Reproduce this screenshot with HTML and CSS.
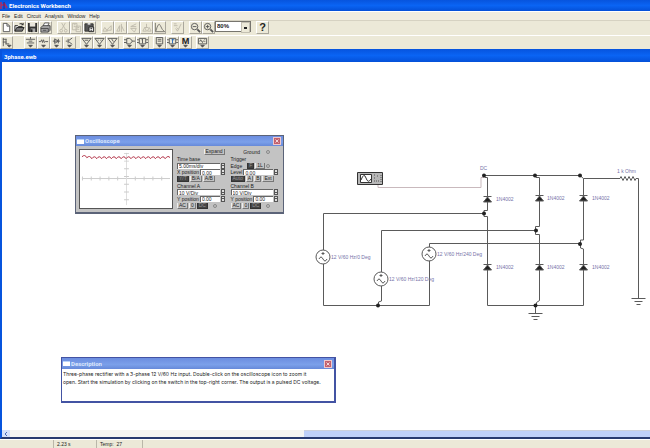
FILE: index.html
```html
<!DOCTYPE html>
<html lang="en">
<head>
<meta charset="utf-8">
<title>Electronics Workbench</title>
<link rel="stylesheet" href="styles.css">
</head>
<body>
<header class="titlebar">
  <svg class="app-icon" viewBox="0 0 8 9" aria-hidden="true"><path d="M1 1v7M1 4h5M4 2l3 5" stroke="#b52a5c" fill="none" stroke-width="1.5"/><path d="M4 1v7" stroke="#402070"/></svg>
  <h1>Electronics Workbench</h1>
</header>
<nav class="menu" aria-label="Main menu">
  <button>File</button><button>Edit</button><button>Circuit</button><button>Analysis</button><button>Window</button><button>Help</button>
</nav>
<div class="toolbar main-tools" role="toolbar" aria-label="Standard">
  <div class="group">
    <button class="tool" aria-label="New"><svg viewBox="0 0 12 12"><path d="M2.500 1.500h4l3 3v6h-7z" fill="#fff" stroke="#555"/><path d="M6.500 1.500v3h3" fill="none" stroke="#555"/></svg></button>
    <button class="tool" aria-label="Open"><svg viewBox="0 0 12 12"><path d="M1 10V4h3l1 1h4v2" fill="#eee" stroke="#222"/><path d="M1 10l2-4h8l-2 4z" fill="#777" stroke="#222"/><path d="M6 2q3-1 4 1M10 1v2H8" fill="none" stroke="#222"/></svg></button>
    <button class="tool" aria-label="Save"><svg viewBox="0 0 12 12"><path d="M1 1h10v10H2l-1-1z" fill="#333"/><path d="M3 1h6v4H3z" fill="#e8e5dc"/><path d="M4 7h5v4H4z" fill="#aaa"/><path d="M4 8h2v3H4z" fill="#222"/></svg></button>
    <button class="tool" aria-label="Print"><svg viewBox="0 0 12 12"><path d="M3 5l2-4h5L8 5z" fill="#fff" stroke="#555"/><path d="M1 6l2-2h8v5l-2 2H1z" fill="#aaa" stroke="#444"/><path d="M1 7h8v4M3 9h4" fill="none" stroke="#444"/></svg></button>
  </div>
  <div class="group">
    <button class="tool dim" aria-label="Cut"><svg viewBox="0 0 12 12"><path d="M4 1l4 7M8 1L4 8" /><circle cx="3.500" cy="9.500" r="1.500"/><circle cx="8.500" cy="9.500" r="1.500"/></svg></button>
    <button class="tool dim" aria-label="Copy"><svg viewBox="0 0 12 12"><path d="M1.500 1.500h5v7h-5zM5.500 4.500h5v6h-5zM3 3h2M3 5h2M7 6h2M7 8h2"/></svg></button>
    <button class="tool" aria-label="Paste"><svg viewBox="0 0 12 12"><path d="M1 2h9v8H1z" fill="#555" stroke="#333"/><path d="M4 1h3v2H4z" fill="#ddd"/><path d="M5.500 5.500h5v5h-5z" fill="#fff" stroke="#222"/><path d="M7 7h2M7 9h2" stroke="#222"/></svg></button>
  </div>
  <div class="group">
    <button class="tool dim" aria-label="Rotate"><svg viewBox="0 0 12 12"><path d="M1 10h5L3 6zM5 9l5-5v5z"/></svg></button>
    <button class="tool dim" aria-label="Flip horizontal"><svg viewBox="0 0 12 12"><path d="M2 10l3-6v6zM7 2v9M7 4l3 6"/></svg></button>
    <button class="tool dim" aria-label="Flip vertical"><svg viewBox="0 0 12 12"><path d="M9 2L3 5h6M3 7h6l-2 4z"/></svg></button>
    <button class="tool dim" aria-label="Create subcircuit"><svg viewBox="0 0 12 12"><path d="M6 2v4M4 6h4M2 10l2-4 2 4zM7 10l2-4 2 4z"/></svg></button>
    <button class="tool mid" aria-label="Display graphs"><svg viewBox="0 0 12 12"><path d="M1.500 1v9.500H12M2 10Q5-1 7 4t4 6"/></svg></button>
  </div>
  <div class="group">
    <button class="tool dim" aria-label="Component properties"><svg viewBox="0 0 12 12"><path d="M2 2h3M2 4h4M4 7l2 3 4-8M5 6l2 2"/></svg></button>
  </div>
  <div class="group">
    <button class="tool dark" aria-label="Zoom out"><svg viewBox="0 0 12 12"><circle cx="5" cy="5" r="3.500"/><path d="M3 5h4"/><path d="M8 8l3 3" stroke-width="2"/></svg></button>
    <button class="tool dark" aria-label="Zoom in"><svg viewBox="0 0 12 12"><circle cx="5" cy="5" r="3.500"/><path d="M3 5h4M5 3v4"/><path d="M8 8l3 3" stroke-width="2"/></svg></button>
    <div class="zoom-box">
      <select aria-label="Zoom level"><option>80%</option><option>100%</option></select>
    </div>
  </div>
  <div class="group">
    <button class="tool letter" aria-label="Help">?</button>
  </div>
</div>
<div class="toolbar part-tools" role="toolbar" aria-label="Parts">
  <div class="group first">
    <button class="tool dark" aria-label="Favorites"><svg viewBox="0 0 12 12"><path d="M2.500 1v9M2 2.500h4M2 5.500h4M5 7.500h4M5.500 2v6"/><path d="M7 9h4l-2 2z" fill="#333"/></svg></button>
  </div>
  <div class="group">
    <button class="tool dark" aria-label="Sources"><svg viewBox="0 0 12 12"><path d="M6 0v2M1 2.500h10M4 4.500h4M2 6.500h8"/><path d="M4 9h4l-2 2z" fill="#333"/></svg></button>
    <button class="tool dark" aria-label="Basic"><svg viewBox="0 0 12 12"><path d="M1 5h2l1-2 1 3 1-3 1 3 1-1h3"/><path d="M4 9h4l-2 2z" fill="#333"/></svg></button>
    <button class="tool dark" aria-label="Diodes"><svg viewBox="0 0 12 12"><path d="M2 4.500h8M4 2l4 2.500L4 7zM8 2v5"/><path d="M4 9h4l-2 2z" fill="#333"/></svg></button>
    <button class="tool dark" aria-label="Transistors"><svg viewBox="0 0 12 12"><path d="M2 4.500h2M4.500 2v5M5 4l4-3M5 5l4 3"/><path d="M4 9h4l-2 2z" fill="#333"/></svg></button>
  </div>
  <div class="group">
    <button class="tool dark" aria-label="Analog ICs"><svg viewBox="0 0 12 12"><path d="M1 1.500h10L6 8zM4 3.500h4"/><path d="M4 9h4l-2 2z" fill="#333"/></svg></button>
    <button class="tool dark" aria-label="Mixed ICs"><svg viewBox="0 0 12 12"><path d="M1 1.500h10L6 8zM4 3.500h1M7 3.500h1"/><path d="M4 9h4l-2 2z" fill="#333"/></svg></button>
    <button class="tool dark" aria-label="Digital ICs"><svg viewBox="0 0 12 12"><path d="M1 1.500h10L6 8zM5 2l2 3"/><path d="M4 9h4l-2 2z" fill="#333"/></svg></button>
  </div>
  <div class="group">
    <button class="tool dark" aria-label="Logic gates"><svg viewBox="0 0 12 12"><path d="M3 1.500h3q6 3 0 6H3zM0 3h3M0 6h3M9 4.500h3"/><path d="M4 9h4l-2 2z" fill="#333"/></svg></button>
    <button class="tool dark" aria-label="Digital"><svg viewBox="0 0 12 12"><path d="M2.500 1.500h7v6h-7zM0 3h2M0 6h2M10 3h2M10 6h2M6 2v5M5 3h1"/><path d="M4 9h4l-2 2z" fill="#333"/></svg></button>
  </div>
  <div class="group">
    <button class="tool dark" aria-label="Indicators"><svg viewBox="0 0 12 12"><path d="M2.500 .500h7v7h-7zM4 2.500h4M4 4.500h4"/><path d="M4 9h4l-2 2z" fill="#333"/></svg></button>
    <button class="tool dark" aria-label="Controls"><svg viewBox="0 0 12 12"><path d="M2.500 1.500h7v6h-7zM0 3h2M0 6h2M10 3h2M10 6h2"/><path d="M6 2v5M5 3h3" stroke="#2468b8"/><path d="M4 9h4l-2 2z" fill="#333"/></svg></button>
    <button class="tool dark" aria-label="Miscellaneous"><svg viewBox="0 0 12 12"><text class="glyph" x="6" y="8">M</text><path d="M4 9h4l-2 2z" fill="#333"/></svg></button>
  </div>
  <div class="group">
    <button class="tool dark" aria-label="Instruments"><svg viewBox="0 0 12 12"><path d="M1.500 1.500h9v6h-9zM3 5l1-2 2 3 1-2M8 3h1M8 5h1"/><path d="M4 9h4l-2 2z" fill="#333"/></svg></button>
  </div>
</div>

<main class="document">
  <h2 class="doc-title">3phase.ewb</h2>
  <div class="canvas">
    <svg class="circuit" viewBox="0 0 650 368" role="img" aria-label="Three-phase rectifier circuit">
      <defs>
        <g id="source"><circle r="7" fill="#fff"/><path d="M0-5v3M-1.500-3.500h3M-4 2q2-4 4 0t4 0"/></g>
        <g id="diode"><path d="M-4 3L0-2 4 3z" fill="#222"/><path d="M-4-2.500h8"/></g>
        <g id="ground"><path d="M0-8v8M-7 .500H7M-4 3.500h8M-2 6.500h4"/></g>
      </defs>
      <g class="probe"><path d="M378 122v3.500h103v-10h3v-3"/></g>
      <g class="wire">
        <path d="M323.500 188v-36.500H484M323.500 202v41.500H429.500V198"/>
        <path d="M381.500 210v-41.500H535M381.500 224v15l-3 1v4"/>
        <path d="M429.500 185v-3.500H580"/>
        <path d="M484 113.500h96l3.500 3V123"/>
        <path d="M484 113.500l1 2h2.500v33h-3.500v6h3.500v89M535 113.500l1 2h3.500v49h-4v8h4v66l-3 2v3M583.500 117v61h-3v8l3 1v56.500H487.500M535.500 243v8"/>
        <path d="M583.500 116.500H620l1-2 2 4 2-4 2 4 2-4 2 4 2-4 2 4 1-2h2.500V229"/>
        <use href="#source" x="323" y="195"/><use href="#source" x="381" y="217"/><use href="#source" x="429" y="192"/>
        <use href="#diode" x="487.500" y="137"/><use href="#diode" x="539.500" y="136"/><use href="#diode" x="583.500" y="136"/>
        <use href="#diode" x="487.500" y="205"/><use href="#diode" x="539.500" y="205"/><use href="#diode" x="583.500" y="205"/>
        <use href="#ground" x="535.500" y="251"/><use href="#ground" x="638.500" y="236"/>
      </g>
      <g class="dots">
        <circle cx="484" cy="113.500" r="2"/><circle cx="535" cy="113.500" r="2"/><circle cx="580" cy="113.500" r="2"/>
        <circle cx="484" cy="151.500" r="2"/><circle cx="536" cy="168.500" r="2"/><circle cx="580" cy="182" r="2"/>
        <circle cx="378" cy="243.500" r="2"/><circle cx="535.500" cy="243.500" r="2"/>
      </g>
      <g class="scope-part"><path d="M357.500 110.500h25v12h-25z" fill="#b7b7b7" stroke="#333"/><path d="M360.500 112.500h11v8h-11z" fill="#fff" stroke="#333"/><path d="M361 118q3-8 5-2t5 1" fill="none" stroke="#333"/><path d="M374 113h2M374 116h2M377 114h2M374 119h5M381 113v8" stroke="#555" stroke-dasharray="1 1"/></g>
      <g class="labels">
        <text x="331" y="197">12 V/60 Hz/0 Deg</text>
        <text x="389" y="219">12 V/60 Hz/120 Deg</text>
        <text x="437" y="194">12 V/60 Hz/240 Deg</text>
        <text x="496" y="139">1N4002</text><text x="547" y="138">1N4002</text><text x="592" y="138">1N4002</text>
        <text x="496" y="207">1N4002</text><text x="547" y="207">1N4002</text><text x="592" y="207">1N4002</text>
        <text x="480" y="108">DC</text><text x="617" y="111">1 k Ohm</text>
      </g>
    </svg>

    <section class="window scope" aria-label="Oscilloscope">
      <div class="window-title"><span class="window-icon"></span><h3>Oscilloscope</h3><button class="close" aria-label="Close oscilloscope"><svg viewBox="0 0 8 8"><path d="M2 2l4 4M6 2L2 6"/></svg></button></div>
      <div class="scope-body">
        <svg class="screen" viewBox="0 0 94 60" preserveAspectRatio="none" role="img" aria-label="Rectified output trace">
          <path d="M2 29.500h90" stroke="#ccc"/><path d="M2 29.500h90" stroke="#ccc" stroke-width="4" stroke-dasharray="1 8"/>
          <path d="M47.500 3v54" stroke="#ddd"/><path d="M47.500 3v54" stroke="#ccc" stroke-width="5" stroke-dasharray="1 7"/>
          <path d="M2 7q3-3 5 1q3-3 5 1q3-4 5 0q3-4 5 0q3-4 5 0q3-4 5 0q3-4 5 0q3-4 5 0q3-4 5 0q3-4 5 0q3-4 5 0q3-4 5 0q3-4 5 0q3-4 5 0q3-4 5 0q3-4 5 0q3-4 5 0q3-4 5-1" fill="none" stroke="#b02c42" stroke-width="1"/>
        </svg>
        <div class="controls">
          <div class="panel">
            <div class="row end"><button>Expand</button></div>
            <div class="row"><label for="timebase">Time base</label></div>
            <div class="row"><input class="value" id="timebase" value="5.00ms/div"><span class="spin"></span></div>
            <div class="row"><label for="xpos">X position</label><input class="value" id="xpos" value="0.00"><span class="spin"></span></div>
            <div class="row"><button class="on">Y/T</button><button>B/A</button><button>A/B</button></div>
            <div class="row"><label for="cha">Channel A</label></div>
            <div class="row"><input class="value" id="cha" value="10 V/Div"><span class="spin"></span></div>
            <div class="row"><label for="ypa">Y position</label><input class="value" id="ypa" value="0.00"><span class="spin"></span></div>
            <div class="row"><button>AC</button><button>0</button><button class="on">DC</button><i class="jack"></i></div>
          </div>
          <div class="panel">
            <div class="row end"><span>Ground</span><i class="jack"></i></div>
            <div class="row"><span>Trigger</span></div>
            <div class="row"><span class="edge">Edge</span><button class="on" aria-label="Rising edge">F</button><button aria-label="Falling edge">1L</button><i class="jack"></i></div>
            <div class="row"><label for="level">Level</label><input class="value" id="level" value="0.00"><span class="spin"></span></div>
            <div class="row"><button class="on">Auto</button><button>A</button><button>B</button><button>Ext</button></div>
            <div class="row"><label for="chb">Channel B</label></div>
            <div class="row"><input class="value" id="chb" value="10 V/Div"><span class="spin"></span></div>
            <div class="row"><label for="ypb">Y position</label><input class="value" id="ypb" value="0.00"><span class="spin"></span></div>
            <div class="row"><button>AC</button><button>0</button><button class="on">DC</button><i class="jack"></i></div>
          </div>
        </div>
      </div>
    </section>

    <section class="window description" aria-label="Description">
      <div class="window-title"><span class="window-icon"></span><h3>Description</h3><button class="close" aria-label="Close description"><svg viewBox="0 0 8 8"><path d="M2 2l4 4M6 2L2 6"/></svg></button></div>
      <p>Three-phase rectifier with a 3-phase 12 V/60 Hz input. Double-click on the oscilloscope icon to zoom it<br>open. Start the simulation by clicking on the switch in the top-right corner. The output is a pulsed DC voltage.</p>
    </section>
  </div>
  <div class="scrollbar"><button class="scroll-left" aria-label="Scroll left"><svg viewBox="0 0 6 6"><path d="M4 1L2 3l2 2" fill="none" stroke="#4468b8"/></svg></button><span class="track"></span><span class="thumb"></span></div>
</main>
<footer class="status"><span class="cell ready"></span><span class="cell time">2.23 s</span><span class="cell temp">Temp:&nbsp; 27</span></footer>
</body>
</html>
```
FILE: styles.css
```css
* { box-sizing: border-box; }
body {
  margin: 0;
  min-height: 100vh;
  display: flex;
  flex-direction: column;
  background: #ece9d8;
  color: #222;
  font: 6px/8px "Liberation Sans", sans-serif;
  overflow: hidden;
}
button, input, select { font: inherit; color: inherit; margin: 0; padding: 0; border: 0; border-radius: 0; background: none; appearance: none; }
h1, h2, h3, p { margin: 0; font: inherit; }
.titlebar { display: flex; align-items: center; height: 11px; background: linear-gradient(#0754dd, #0a64f4 50%, #0450d8); color: #fff; font: bold 6px/11px Roboto, sans-serif; }
.app-icon { width: 8px; height: 9px; margin-right: 1px; }
.menu { display: flex; gap: 4px; height: 9px; padding-left: 2px; background: #f0ede0; border-top: 1px solid #fff; font: 5px/8px "Liberation Sans", sans-serif; }
.toolbar { display: flex; height: 15px; border-top: 1px solid #d6d2c2; }
.main-tools { gap: 5px; }
.part-tools { gap: 4px; height: 14px; border-top-color: #fff; }
.first { margin-right: 7px; }
.group { display: flex; }
.tool { display: grid; place-items: center; width: 13px; height: 13px; border: 1px solid; border-color: #fff #aaa79c #aaa79c #fff; }
.tool svg { width: 11px; height: 11px; }
.dim svg { fill: none; stroke: #bdb9ab; }
.mid svg { fill: none; stroke: #77756e; }
.dark svg { fill: none; stroke: #555; }
.letter { font: bold 11px/11px "Liberation Sans", sans-serif; }
.tool .glyph { fill: #222; stroke: none; text-anchor: middle; font: bold 10px "Liberation Sans", sans-serif; }
.zoom-box { position: relative; width: 36px; height: 11px; border: 1px solid #77756e; background: #fff; }
.zoom-box select { display: block; width: 100%; height: 9px; padding-left: 1px; font: bold 6px/9px "Liberation Sans", sans-serif; }
.zoom-box::after { content: ""; position: absolute; right: 0; top: 0; width: 7px; height: 9px; background: linear-gradient(#222, #222) center / 3px 2px no-repeat #ece9d8; border: 1px solid #c4c0b2; pointer-events: none; }
.document { flex: 1; display: flex; flex-direction: column; border-left: 2px solid #0754dd; border-bottom: 2px solid #283a70; background: #fff; }
.doc-title { height: 13px; padding-left: 2px; background: linear-gradient(#0754dd, #0a64f4 50%, #0450d8); color: #fff; font: bold 6px/15px Roboto, sans-serif; }
.canvas { position: relative; flex: 1; overflow: hidden; }
.circuit { position: absolute; left: -2px; top: 0; width: 650px; height: 368px; }
.wire { fill: none; stroke: #5a5a5a; }
.probe { fill: none; stroke: #c9b9bd; }
.dots { fill: #222; }
.labels { fill: #7673a8; font: 5px "Liberation Sans", sans-serif; }
.window { position: absolute; border: 1px solid #3d4f9d; background: #fff; }
.window-title { display: flex; align-items: center; height: 10px; padding: 0 2px 0 1px; gap: 1px; background: linear-gradient(#6c8de0, #7ba0ea 60%, #6689d9); color: #dce6fb; font: bold 6px/10px Roboto, sans-serif; }
.window-title h3 { flex: 1; }
.window-icon { width: 7px; height: 5px; background: #fff; border-top: 1px solid #b9d4fa; }
.close { width: 8px; height: 8px; border: 1px solid #f0c8cb; background: #c2606c; display: grid; }
.close svg { width: 6px; height: 6px; stroke: #fff; }
.scope { left: 73px; top: 73px; width: 209px; border: 1px solid #5b6378; border-bottom-width: 2px; background: #c3c3c3; }
.scope-body { display: flex; gap: 4px; padding: 3px 5px 3px 3px; }
.screen { width: 94px; height: 60px; border: 1px solid #555; background: #fff; flex: none; }
.controls { flex: 1; display: grid; grid-template-columns: 1fr 1fr; gap: 6px; }
.panel { display: grid; grid-template-rows: repeat(9, 1fr); font-size: 5px; line-height: 6px; color: #222; min-width: 0; }
.row { display: flex; align-items: center; gap: 1px; min-width: 0; min-height: 0; white-space: nowrap; }
.end { justify-content: flex-end; }
.edge { margin-right: 4px; }
.value { flex: 1; min-width: 0; width: 0; height: 6px; background: #fff; border: 1px solid #666; border-width: 1px 0 0 1px; line-height: 5px; padding-left: 1px; }
.spin { width: 4px; height: 6px; border: 1px solid #555; background: linear-gradient(#555, #555) center / 4px 1px no-repeat #ddd; }
.row button { padding: 0 1px; height: 6px; line-height: 5px; border: 1px solid; border-color: #eee #777 #777 #eee; border-width: 0 1px 1px; }
.row .on { background: #444; color: #999; border-color: #333; }
.jack { flex: none; width: 4px; height: 4px; margin: 0 8px 0 auto; border: 1px solid #888; border-radius: 50%; }
.end .jack { margin-left: 5px; }
.description { left: 59px; top: 295px; width: 275px; height: 46px; border: 1px solid #4353a3; border-right-width: 2px; border-bottom-width: 2px; }
.description .window-title { height: 11px; }
.description p { padding: 1px; font: 5px/8px Inter, sans-serif; white-space: nowrap; }
.scrollbar { display: flex; height: 7px; background: #f5f5f2; }
.scroll-left { width: 8px; background: #d4e0fb; display: grid; place-items: center; }
.scroll-left svg { width: 6px; height: 6px; }
.track { flex: 294; }
.thumb { flex: 346; background: #bfd0f8; border-top: 1px solid #ccd0dc; }
.status { display: flex; height: 9px; border-top: 1px solid #fff; font-size: 5px; line-height: 8px; }
.cell { border-right: 1px solid #bab7a9; padding-left: 3px; }
.ready { width: 54px; }
.time { width: 43px; }
.temp { width: 46px; }
```
